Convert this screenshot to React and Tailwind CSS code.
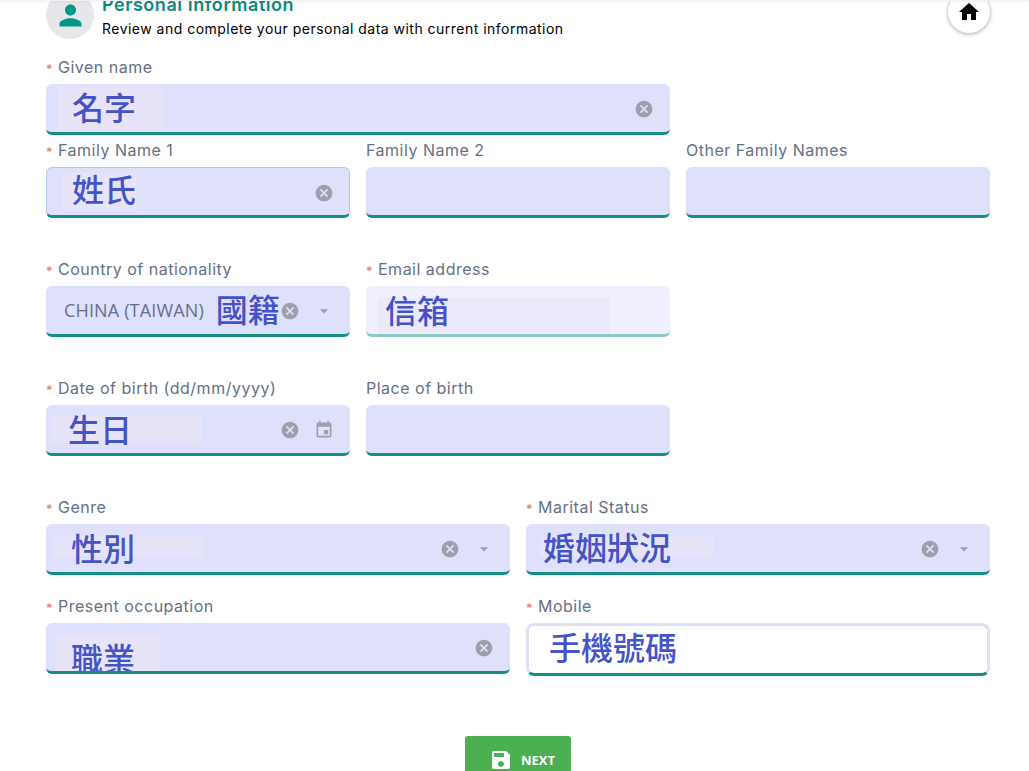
import React from 'react';

const ICONS = {
  cancel: 'M12 2C6.47 2 2 6.47 2 12s4.47 10 10 10 10-4.47 10-10S17.53 2 12 2zm5 13.59L15.59 17 12 13.41 8.41 17 7 15.59 10.59 12 7 8.41 8.41 7 12 10.59 15.59 7 17 8.41 13.41 12 17 15.59z',
  drop: 'M7 10l5 5 5-5z',
  event: 'M17 12h-5v5h5v-5zM16 1v2H8V1H6v2H5c-1.11 0-1.99.9-1.99 2L3 19c0 1.1.89 2 2 2h14c1.1 0 2-.9 2-2V5c0-1.1-.9-2-2-2h-1V1h-2zm3 18H5V8h14v11z',
  home: 'M10 20v-6h4v6h5v-8h3L12 3 2 12h3v8z',
  person: 'M12 12c2.21 0 4-1.79 4-4s-1.79-4-4-4-4 1.79-4 4 1.79 4 4 4zm0 2c-2.67 0-8 1.34-8 4v2h16v-2c0-2.66-5.33-4-8-4z',
  save: 'M17 3H5c-1.11 0-2 .9-2 2v14c0 1.1.89 2 2 2h14c1.1 0 2-.9 2-2V7l-4-4zm-5 16c-1.66 0-3-1.34-3-3s1.34-3 3-3 3 1.34 3 3-1.34 3-3 3zm3-10H5V5h10v4z',
};

function Icon({ name, className }) {
  return (
    <svg viewBox="0 0 24 24" fill="currentColor" className={className}>
      <path d={ICONS[name]} />
    </svg>
  );
}

function Ink({ children, className }) {
  return (
    <span className={`font-['Noto_Sans_CJK_TC',sans-serif] text-[32px] font-medium leading-none text-[#4453c6] whitespace-nowrap ${className}`}>
      {children}
    </span>
  );
}

// light patch left behind under the hand-written value
function Patch({ children, className }) {
  return <span className={`flex shrink-0 items-center bg-[#e7e3f8] ${className}`}>{children}</span>;
}

function Clear({ className = '' }) {
  return <Icon name="cancel" className={`mt-[2px] h-5 w-5 shrink-0 text-[#9ca0ab] ${className}`} />;
}

function Drop({ className = '' }) {
  return <Icon name="drop" className={`mt-[2px] h-5 w-5 shrink-0 text-[#9ca0ab] ${className}`} />;
}

function Field({ label, required, span, box = 'h-[51px] rounded-md border-b-[3px] border-[#138f84] bg-[#dfe0fb]', children }) {
  return (
    <div className={span}>
      <div className="mb-[5px] flex h-6 items-center font-['Inter',sans-serif] text-[16px] tracking-[0.5px] text-[#667085]">
        {required && <span className="mt-1 w-3 text-[13px] leading-none text-[#e57373]">*</span>}
        {label}
      </div>
      <div className={`flex items-center overflow-hidden ${box}`}>{children}</div>
    </div>
  );
}

function Row({ className, children }) {
  return <div className={`grid grid-cols-6 items-start gap-x-4 ${className}`}>{children}</div>;
}

export default function App() {
  return (
    <div className="relative h-[771px] overflow-hidden bg-white">
      <div className="absolute inset-x-0 top-0 h-px bg-[#f1f1f1] shadow-sm" />

      <div className="-mt-[9px] ml-[46px] mr-[39px]">
        <div className="flex h-12 items-start justify-between">
          <div className="flex">
            <div className="flex h-12 w-12 items-center justify-center rounded-full bg-[#e5e7eb]">
              <Icon name="person" className="h-[33px] w-[33px] text-[#009688]" />
            </div>
            <div className="ml-2 font-['Inter',sans-serif]">
              <div className="mt-[3px] text-[18px] font-semibold leading-[22px] tracking-[0.55px] text-[#0b8a7e]">Personal Information</div>
              <div className="mt-[3px] text-[14px] leading-5 tracking-[0.48px] text-black">Review and complete your personal data with current information</div>
            </div>
          </div>
          <div className="flex h-[42px] w-[42px] items-center justify-center rounded-full bg-white shadow-[0_1px_4px_rgba(0,0,0,0.35)]">
            <Icon name="home" className="h-6 w-6 text-black" />
          </div>
        </div>

        <Row className="mt-4">
          <Field label="Given name" required span="col-span-4">
            <Patch className="ml-3 h-[45px] w-[105px] pl-[14px]"><Ink className="pb-1">名字</Ink></Patch>
            <Clear className="ml-auto mr-4" />
          </Field>
        </Row>

        <Row className="mt-[3px]">
          <Field
            label="Family Name 1"
            required
            span="col-span-2"
            box="h-[51px] rounded-md border border-b-[3px] border-[#b6c8ee] border-b-[#138f84] bg-[#dfe0fb]"
          >
            <Patch className="ml-[15px] h-[38px] w-[75px] pl-[10px]"><Ink className="pb-2">姓氏</Ink></Patch>
            <Clear className="ml-auto mr-[15px]" />
          </Field>
          <Field label="Family Name 2" span="col-span-2" />
          <Field label="Other Family Names" span="col-span-2" />
        </Row>

        <Row className="mt-[39px]">
          <Field label="Country of nationality" required span="col-span-2">
            <span className="ml-[18px] font-['Open_Sans',sans-serif] text-[18px] tracking-[0.15px] whitespace-nowrap text-[#666f8a]">CHINA (TAIWAN)</span>
            <Ink className="ml-3 pb-1">國籍</Ink>
            <Clear />
            <Drop className="ml-[14px]" />
          </Field>
          <Field
            label="Email address"
            required
            span="col-span-2"
            box="h-[51px] rounded-md border-b-[3px] border-[#8bcac3] bg-[#efeffd]"
          >
            <Patch className="ml-3 mt-[10px] h-[35px] w-[232px] bg-[#ece9fb] pl-[7px]"><Ink className="pb-3">信箱</Ink></Patch>
          </Field>
        </Row>

        <Row className="mt-[39px]">
          <Field label="Date of birth (dd/mm/yyyy)" required span="col-span-2">
            <Patch className="ml-[6px] h-7 w-[150px] pl-4"><Ink className="pb-[2px]">生日</Ink></Patch>
            <Clear className="ml-auto" />
            <Icon name="event" className="ml-[14px] mr-4 mt-[2px] h-5 w-5 shrink-0 text-[#9ca0ab]" />
          </Field>
          <Field label="Place of birth" span="col-span-2" />
        </Row>

        <Row className="mt-[39px]">
          <Field label="Genre" required span="col-span-3">
            <Patch className="mb-1 ml-[7px] h-5 w-[150px] pl-[18px]"><Ink className="pt-[2px]">性別</Ink></Patch>
            <Clear className="ml-auto" />
            <Drop className="ml-[14px] mr-4" />
          </Field>
          <Field label="Marital Status" required span="col-span-3">
            <Patch className="mb-1 ml-[14px] h-5 w-[174px] pl-[3px]"><Ink>婚姻狀況</Ink></Patch>
            <Clear className="ml-auto" />
            <Drop className="ml-[14px] mr-4" />
          </Field>
        </Row>

        <Row className="mt-[19px]">
          <Field label="Present occupation" required span="col-span-3">
            <Patch className="ml-[9px] mt-[12px] h-[38px] w-[105px] pl-4 pt-[8px]"><Ink>職業</Ink></Patch>
            <Clear className="ml-auto mr-4" />
          </Field>
          <Field
            label="Mobile"
            required
            span="col-span-3"
            box="h-[53px] rounded-lg border-[3px] border-b-[3px] border-[#e0e0f8] border-b-[#138f84] bg-white"
          >
            <Ink className="ml-[20px] pb-2">手機號碼</Ink>
          </Field>
        </Row>

        <div className="mt-[60px] flex justify-center">
          <button className="flex h-12 w-[106px] items-start rounded-[3px] bg-[#4caf50] pl-6 pt-[12px] font-['Open_Sans',sans-serif] text-[13px] font-bold text-white">
            <Icon name="save" className="h-6 w-6" />
            <span className="ml-[8px] mt-[3px]">NEXT</span>
          </button>
        </div>
      </div>
    </div>
  );
}
